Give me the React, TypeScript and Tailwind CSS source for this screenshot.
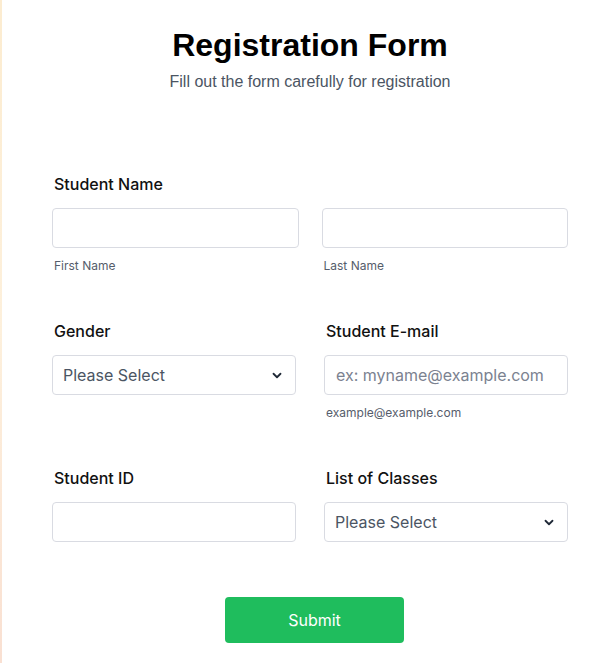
import React from "react";

const inter = { fontFamily: "Inter, 'Noto Sans', sans-serif" };

// Small chevron used by the two select boxes
const Chevron = () => (
  <svg width="10" height="7" viewBox="0 0 10 7" fill="none" className="shrink-0">
    <path d="M1.5 1.75L5 5.25l3.5-3.5" stroke="#1f2937" strokeWidth="1.8" strokeLinecap="round" strokeLinejoin="round" />
  </svg>
);

const Label = ({ children }: { children: React.ReactNode }) => (
  <div className="pl-[2px] text-[16px] leading-6 font-medium text-[#111111]" style={inter}>
    {children}
  </div>
);

const Helper = ({ children }: { children: React.ReactNode }) => (
  <div className="mt-[10px] pl-[2px] text-[12px] leading-4 text-[#565d6b]" style={inter}>
    {children}
  </div>
);

const TextBox = ({ placeholder = "" }: { placeholder?: string }) => (
  <div
    className="mt-3 h-10 rounded-[4px] border border-[#d9dbe2] bg-white px-[11px] flex items-center text-[16px] text-[#7b8290]"
    style={inter}
  >
    {placeholder}
  </div>
);

const SelectBox = () => (
  <div
    className="mt-3 h-10 rounded-[4px] border border-[#d9dbe2] bg-white pl-[10px] pr-[13px] flex items-center justify-between text-[16px] text-[#4b5563]"
    style={inter}
  >
    <span>Please Select</span>
    <Chevron />
  </div>
);

export default function App() {
  return (
    <div className="flex h-[663px] w-full bg-white overflow-hidden">
      <div className="w-[2px] shrink-0 bg-gradient-to-b from-[#fcecd0] via-[#fdf0dc] to-[#f9e0d2]" />
      <div className="w-[516px] ml-[50px] flex flex-col">
        <h1
          className="mt-[25px] text-center text-[32px] leading-10 font-bold text-black"
          style={{ fontFamily: "'Liberation Sans', Arial, sans-serif" }}
        >
          Registration Form
        </h1>
        <p
          className="mt-[5px] text-center text-[16px] leading-6 text-[#4b5563]"
          style={{ fontFamily: "'Liberation Sans', Arial, sans-serif" }}
        >
          Fill out the form carefully for registration
        </p>

        {/* Student name row */}
        <div className="mt-[78px]">
          <Label>Student Name</Label>
          <div className="grid grid-cols-2 gap-x-[23px]">
            <div>
              <TextBox />
              <Helper>First Name</Helper>
            </div>
            <div>
              <TextBox />
              <Helper>Last Name</Helper>
            </div>
          </div>
        </div>

        {/* Gender / email row */}
        <div className="mt-[45px] grid grid-cols-2 gap-x-[28px]">
          <div>
            <Label>Gender</Label>
            <SelectBox />
          </div>
          <div>
            <Label>Student E-mail</Label>
            <TextBox placeholder="ex: myname@example.com" />
            <Helper>example@example.com</Helper>
          </div>
        </div>

        {/* Student ID / classes row */}
        <div className="mt-[45px] grid grid-cols-2 gap-x-[28px]">
          <div>
            <Label>Student ID</Label>
            <TextBox />
          </div>
          <div>
            <Label>List of Classes</Label>
            <SelectBox />
          </div>
        </div>

        <div className="mt-[55px] flex justify-center pl-[9px]">
          <button
            className="h-[46px] w-[179px] rounded-[4px] bg-[#1fbd5d] text-white text-[16px]"
            style={inter}
          >
            Submit
          </button>
        </div>
      </div>
    </div>
  );
}
